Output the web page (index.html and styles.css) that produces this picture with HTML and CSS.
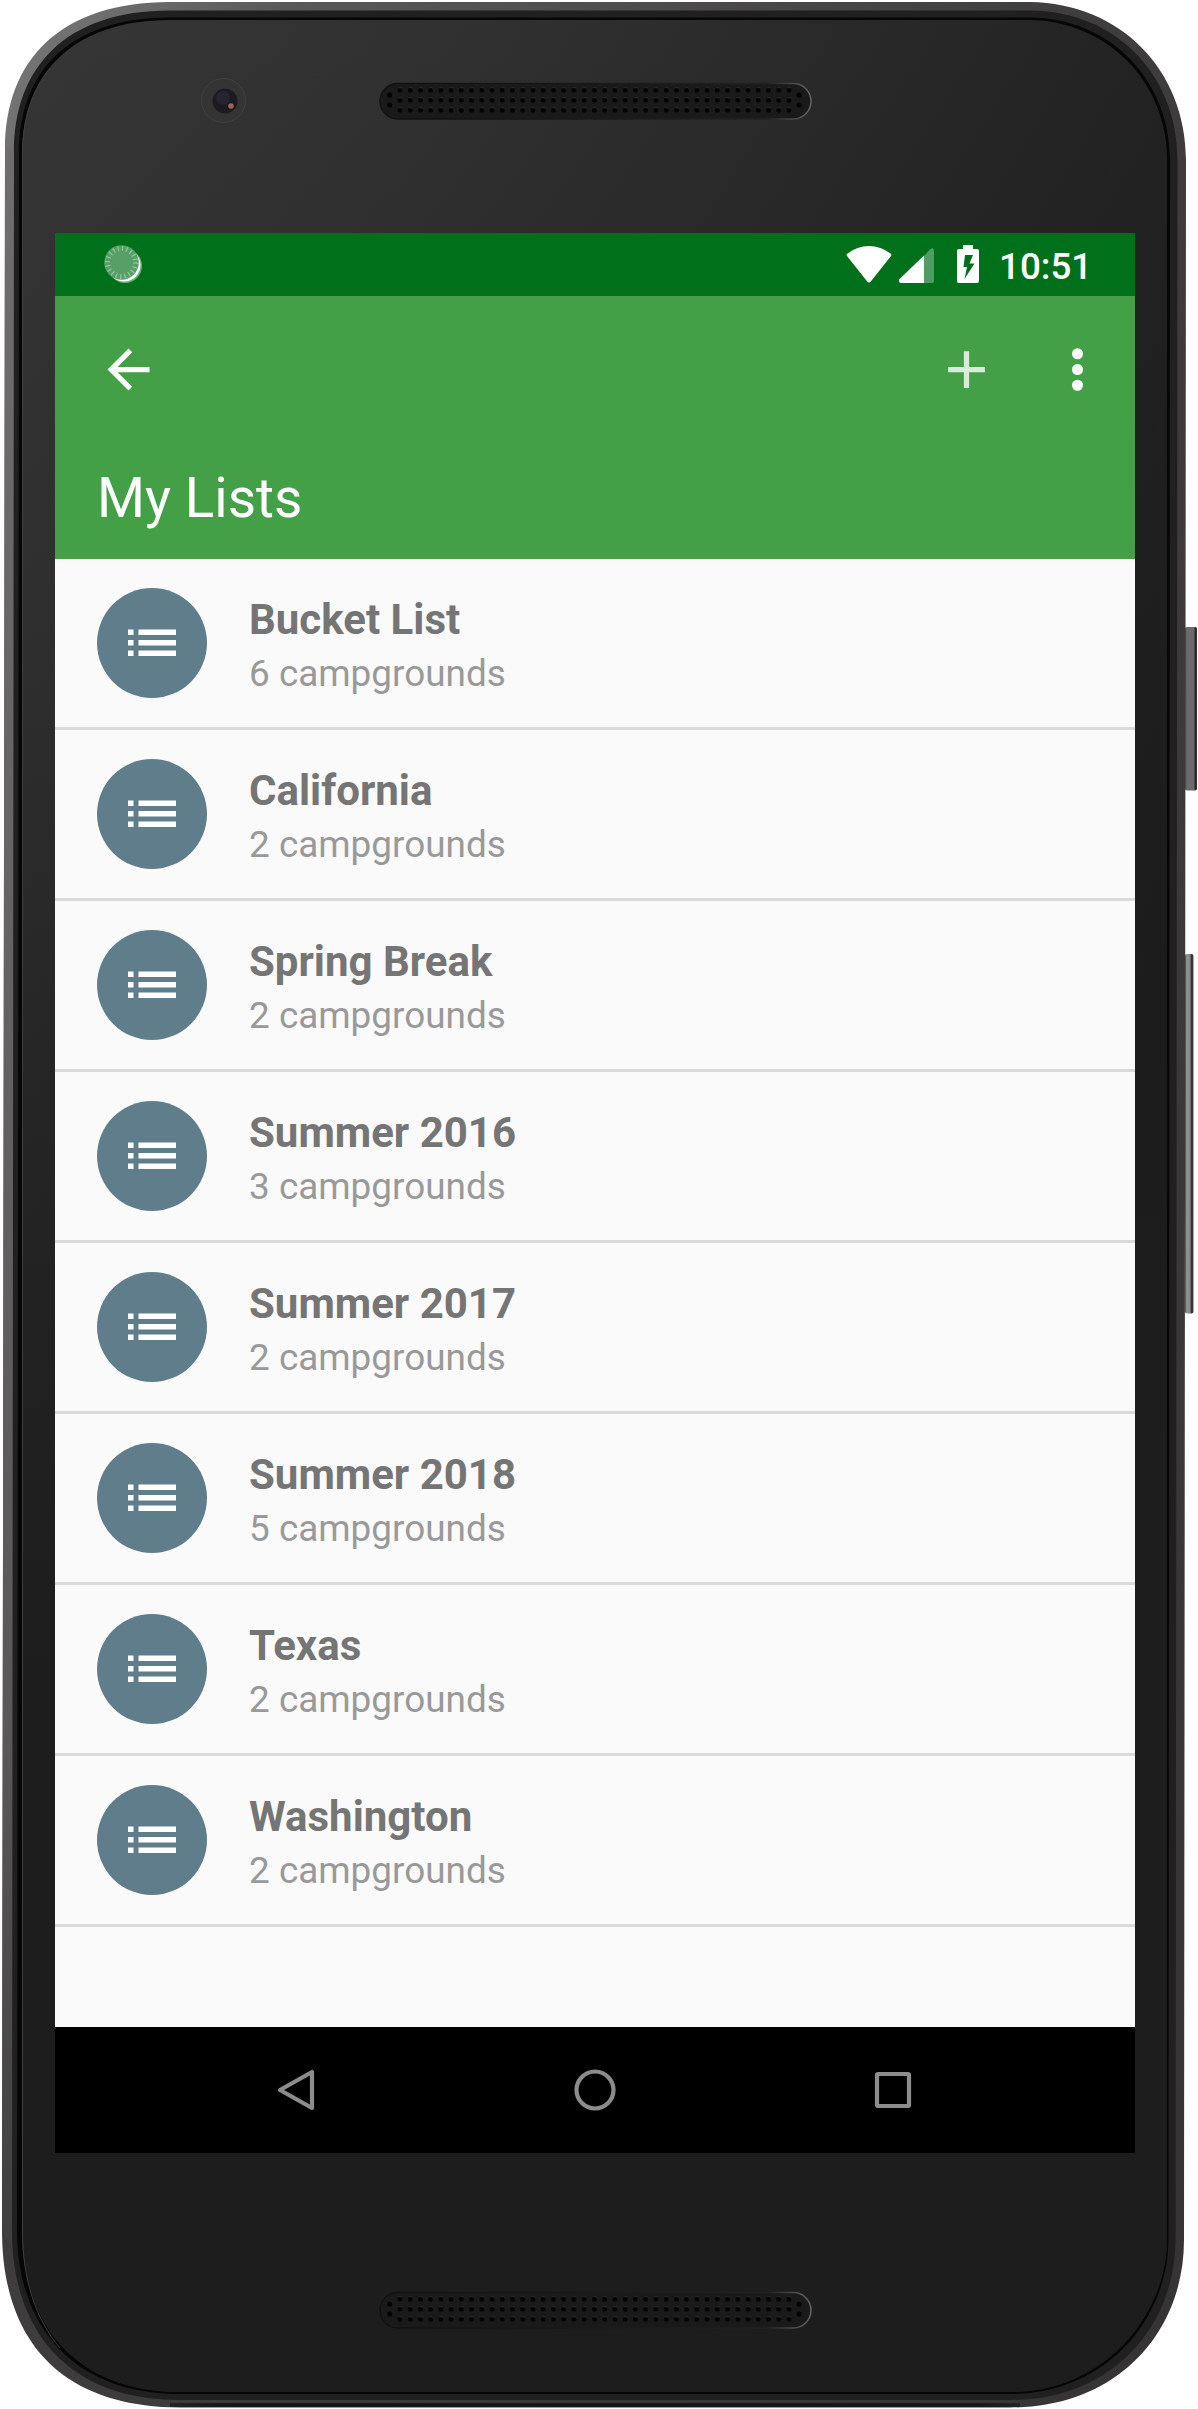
FILE: index.html
```
<!DOCTYPE html>
<html lang="en">
<head>
<meta charset="utf-8">
<title>My Lists</title>
<link rel="stylesheet" href="styles.css">
</head>
<body>
<div class="phone">
  <svg class="device" width="1198" height="2409" viewBox="0 0 1198 2409" aria-hidden="true">
    <defs>
      <linearGradient id="metal" x1="0" y1="0" x2="1" y2="1">
        <stop offset="0" stop-color="#7b7a7b"/><stop offset=".12" stop-color="#5a595a"/><stop offset=".45" stop-color="#3f3d3e"/><stop offset="1" stop-color="#353334"/>
      </linearGradient>
      <linearGradient id="sidefade" x1="0" y1="0" x2="0" y2="1">
        <stop offset="0" stop-color="#6f6d6e"/><stop offset=".75" stop-color="#5a5859"/><stop offset="1" stop-color="#403f40"/>
      </linearGradient>
      <linearGradient id="edge" gradientUnits="userSpaceOnUse" x1="100" y1="0" x2="1090" y2="0">
        <stop offset="0" stop-color="#171717" stop-opacity="0"/><stop offset=".12" stop-color="#171717"/><stop offset=".88" stop-color="#171717"/><stop offset="1" stop-color="#171717" stop-opacity="0"/>
      </linearGradient>
      <linearGradient id="glass" gradientUnits="userSpaceOnUse" x1="0" y1="0" x2="1320" y2="660">
        <stop offset="0" stop-color="#363637"/><stop offset=".3" stop-color="#303031"/><stop offset=".68" stop-color="#242424"/><stop offset="1" stop-color="#1b1b1b"/>
      </linearGradient>
      <linearGradient id="shade" x1="0" y1="0" x2="0" y2="1">
        <stop offset="0" stop-color="#1d1d1e" stop-opacity="0"/><stop offset=".25" stop-color="#1d1d1e" stop-opacity=".15"/><stop offset=".7" stop-color="#1d1d1e"/><stop offset="1" stop-color="#1d1d1e"/>
      </linearGradient>
      <linearGradient id="power" x1="0" x2="1" y1="0" y2="0">
        <stop offset="0" stop-color="#555354"/><stop offset=".2" stop-color="#6c6a6c"/><stop offset=".75" stop-color="#6c6a6c"/><stop offset=".85" stop-color="#222"/><stop offset="1" stop-color="#3c3b3c"/>
      </linearGradient>
      <linearGradient id="volume" x1="0" x2="1" y1="0" y2="0">
        <stop offset="0" stop-color="#444"/><stop offset=".2" stop-color="#979697"/><stop offset=".6" stop-color="#858485"/><stop offset=".8" stop-color="#222"/><stop offset="1" stop-color="#555"/>
      </linearGradient>
      <linearGradient id="lip" x1="0" x2="1" y1="0" y2="0">
        <stop offset="0" stop-color="#101010"/><stop offset=".9" stop-color="#222"/><stop offset="1" stop-color="#66666a"/>
      </linearGradient>
      <pattern id="holes" patternUnits="userSpaceOnUse" x="15.3" y="2.2" width="10.24" height="10">
        <circle cx="5.3" cy="4.4" r="2.100" fill="#555557"/><circle cx="5.1" cy="5.1" r="2.5" fill="#030303"/>
      </pattern>
      <g id="speaker">
        <rect x=".5" y=".5" width="431" height="35.5" rx="17.7" fill="#1a1a1a" stroke="url(#lip)" stroke-width="1.5"/>
        <rect x="15.3" y="2.2" width="399.3" height="30" fill="url(#holes)"/>
        <g fill="#030303"><circle cx="10.2" cy="12.2" r="2.5"/><circle cx="10.2" cy="22" r="2.5"/><circle cx="419.6" cy="12.2" r="2.5"/><circle cx="419.6" cy="22" r="2.5"/></g>
      </g>
    </defs>
    <rect x="1185" y="627" width="12" height="163.500" rx="2" fill="url(#power)"/>
    <rect x="1185" y="954" width="8.5" height="359.500" rx="2" fill="url(#volume)"/>
    <path d="M5 150C5 60 60 2 170 2H1030C1120 3 1186 70 1186 160L1184 2240C1184 2330 1120 2407.500 1010 2407.500H180C60 2407 2 2340 2 2230Z" fill="url(#metal)"/>
    <path d="M5 150V146L16 150L14 2250L2 2230Z" fill="url(#sidefade)"/>
    <rect x="170" y="2403" width="850" height="4" fill="url(#edge)"/>
    <path d="M14 152C14 67 66 10.500 170 10.500H1030C1115 11 1177.500 74 1177.500 160L1175.500 2240C1175 2324 1115 2400 1010 2400H180C69 2400 12 2332 12 2230Z" fill="#202020"/>
    <path d="M19 153C19 71 70 17.500 170 17.500H1030C1109 18 1170 79 1170 160L1168.500 2240C1168 2317 1108 2394 1010 2394H180C74 2394 17 2327 17 2230Z" fill="#060606"/>
    <path d="M22 154C22 74 73 20 170 20H1030C1106 21 1167 81 1167 160V2240C1166 2315 1105 2392 1010 2392H180C77 2392 22 2325 22 2230Z" fill="url(#glass)"/>
    <path d="M22 154C22 74 73 20 170 20H1030C1106 21 1167 81 1167 160V2240C1166 2315 1105 2392 1010 2392H180C77 2392 22 2325 22 2230Z" fill="url(#shade)"/>
    <path d="M60 2348C36 2320 22.500 2280 22.500 2230V154C22.500 120 32 90 50 68" fill="none" stroke="#3e3e3f" stroke-width="1"/>
    <circle cx="223.500" cy="100.500" r="22" fill="#343434" stroke="#414142"/>
    <circle cx="225" cy="101" r="12.500" fill="#1e1a22"/>
    <circle cx="223" cy="98" r="7" fill="#28242f"/>
    <circle cx="231" cy="106" r="2.800" fill="#9a6557"/>
    <use href="#speaker" x="379.500" y="83"/>
    <use href="#speaker" x="379.500" y="2292"/>
  </svg>

  <main class="screen">
    <header class="status">
      <svg class="sync" width="38" height="38" viewBox="0 0 38 38">
        <circle cx="21" cy="21" r="17" fill="#6fb07b"/><circle cx="20" cy="20" r="16.500" fill="#fff"/>
        <circle cx="17.500" cy="17.500" r="17.300" fill="#56a067"/>
        <circle cx="17.500" cy="17.500" r="14" fill="none" stroke="#94c29e" stroke-width="5" stroke-dasharray="1.300 3.098"/>
      </svg>
      <svg class="wifi" width="46" height="37" viewBox="0 0 46 37"><path d="M23 36.500Q22 36.500 21 35.300L1 10Q0 8.700 1.500 7.600Q11 0 23 0T44.500 7.600Q46 8.700 45 10L25 35.300Q24 36.500 23 36.500Z" fill="#fff"/></svg>
      <svg class="signal" width="35" height="35" viewBox="0 0 35 35"><path d="M25 8L31 1.500Q35-1.500 35 3V33Q35 35 33 35H25Z" fill="#4f9d62"/><path d="M25 7.500V35H2Q0 35 0 33V31.500Z" fill="#fff"/></svg>
      <svg class="battery" width="22" height="38" viewBox="0 0 22 38"><path fill-rule="evenodd" fill="#fff" d="M6 0H16V4H20Q22 4 22 6V36Q22 38 20 38H2Q0 38 0 36V6Q0 4 2 4H6ZM8 10L6.500 22H10L7.500 34L17.500 18.500H12.500L16 10Z"/></svg>
      <span class="time">10:51</span>
    </header>
    <section class="appbar">
      <div class="tools">
        <svg width="63" height="63" viewBox="0 0 24 24"><path fill="#fff" d="M20 11H7.830l5.590-5.590L12 4l-8 8 8 8 1.410-1.410L7.830 13H20z"/></svg>
        <svg class="add" width="63" height="63" viewBox="0 0 24 24"><path fill="#fff" fill-opacity=".8" d="M19 13h-6v6h-2v-6H5v-2h6V5h2v6h6z"/></svg>
        <svg width="63" height="63" viewBox="0 0 24 24"><g fill="#fff"><circle cx="12" cy="6" r="2.100"/><circle cx="12" cy="12" r="2.100"/><circle cx="12" cy="18" r="2.100"/></g></svg>
      </div>
      <h1>My Lists</h1>
    </section>
    <svg class="symbols"><symbol id="list" viewBox="0 0 48 28"><path d="M0 .5h5.500V6H0zm10.500 0H48V6H10.500zM0 11h5.500v5.500H0zm10.500 0H48v5.500H10.500zM0 21.500h5.500V27H0zm10.500 0H48V27H10.500z" fill="#fff"/></symbol></svg>
    <ul class="lists">
      <li><span class="avatar"><svg width="48" height="28"><use href="#list"/></svg></span><div><h2>Bucket List</h2><p>6 campgrounds</p></div></li>
      <li><span class="avatar"><svg width="48" height="28"><use href="#list"/></svg></span><div><h2>California</h2><p>2 campgrounds</p></div></li>
      <li><span class="avatar"><svg width="48" height="28"><use href="#list"/></svg></span><div><h2>Spring Break</h2><p>2 campgrounds</p></div></li>
      <li><span class="avatar"><svg width="48" height="28"><use href="#list"/></svg></span><div><h2>Summer 2016</h2><p>3 campgrounds</p></div></li>
      <li><span class="avatar"><svg width="48" height="28"><use href="#list"/></svg></span><div><h2>Summer 2017</h2><p>2 campgrounds</p></div></li>
      <li><span class="avatar"><svg width="48" height="28"><use href="#list"/></svg></span><div><h2>Summer 2018</h2><p>5 campgrounds</p></div></li>
      <li><span class="avatar"><svg width="48" height="28"><use href="#list"/></svg></span><div><h2>Texas</h2><p>2 campgrounds</p></div></li>
      <li><span class="avatar"><svg width="48" height="28"><use href="#list"/></svg></span><div><h2>Washington</h2><p>2 campgrounds</p></div></li>
    </ul>
    <nav class="navbar">
      <svg width="42" height="42" viewBox="0 0 42 42"><path d="M36 3V39L4 21Z"/></svg>
      <svg width="42" height="42" viewBox="0 0 42 42"><circle cx="21" cy="21" r="18.500"/></svg>
      <svg width="42" height="42" viewBox="0 0 42 42"><rect x="5" y="5" width="32" height="32" rx="1"/></svg>
    </nav>
  </main>
</div>
</body>
</html>
```

FILE: styles.css
```
* { box-sizing: border-box; }
body { margin: 0; background: #fff; font-family: Roboto, "Liberation Sans", sans-serif; }
svg { display: block; flex: none; }
h1, h2, p, ul { margin: 0; padding: 0; }

.phone { position: relative; width: 1198px; height: 2409px; padding: 233px 63px 256px 55px; }
.device { position: absolute; left: 0; top: 0; }
.screen { position: relative; width: 1080px; height: 1920px; display: flex; flex-direction: column; background: #fafafa; }
.symbols { display: none; }

.status { height: 63px; flex: none; display: flex; align-items: flex-start; padding: 12px 42px 0 49px; background: #00701a; color: #fff; }
.sync { margin-right: auto; }
.wifi { margin: 1px 7px 0 0; }
.signal { margin: 3px 23px 0 0; }
.time { width: 94px; margin-left: 20px; font-size: 36.75px; font-weight: 500; line-height: 43px; white-space: nowrap; }

.appbar { height: 263px; flex: none; background: #43a047; color: #fff; }
.tools { height: 147px; display: flex; align-items: center; padding: 0 26px 0 42px; }
.add { margin: 0 48px 0 auto; }
.appbar h1 { padding-left: 42px; font-size: 55px; font-weight: 400; line-height: 66px; margin-top: 22px; }

.lists { flex: 1; list-style: none; }
.lists li { height: 171px; display: flex; align-items: flex-start; gap: 42px; padding: 29px 42px 0; border-bottom: 3px solid #dadada; }
.avatar { width: 110px; height: 110px; border-radius: 50%; background: #607d8b; display: flex; align-items: center; justify-content: center; flex: none; }
.lists h2 { margin-top: 7px; font-size: 42px; font-weight: 700; line-height: 49px; color: #757575; }
.lists p { margin-top: 8px; font-size: 36.9px; line-height: 43px; color: #999; }

.navbar { height: 126px; flex: none; display: flex; align-items: center; justify-content: space-between; padding: 0 221px; background: #000; }
.navbar svg { fill: none; stroke: #8c8c8c; stroke-width: 4.2; stroke-linejoin: round; }
```
